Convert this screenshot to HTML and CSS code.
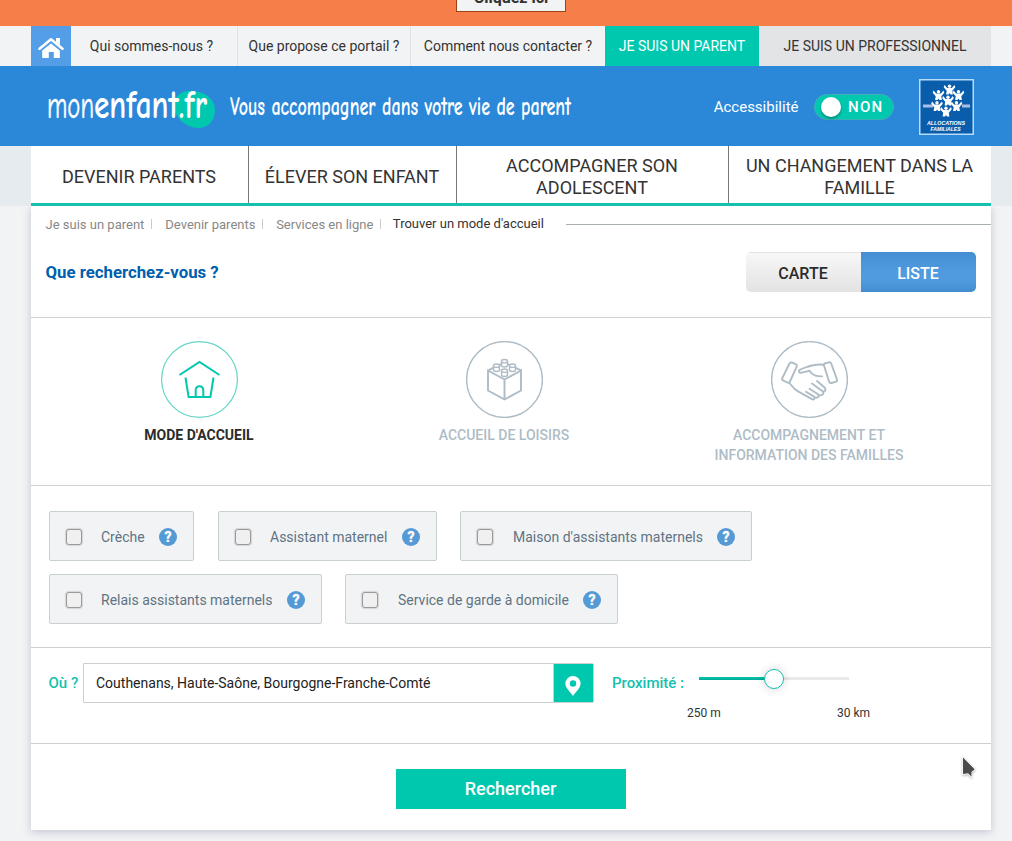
FILE: index.html
```html
<!DOCTYPE html>
<html lang="fr">
<head>
<meta charset="utf-8">
<title>monenfant.fr</title>
<link rel="stylesheet" href="styles.css">
</head>
<body>
<div class="notice"><a class="notice-btn">Cliquez ici</a></div>

<div class="topbar wrap">
  <a class="home"><svg width="26" height="22" viewBox="0 0 26 22"><path d="M1.5 11.8 13 2.3l11.500 9.500" fill="none" stroke="#fff" stroke-width="2.500" stroke-linecap="round" stroke-linejoin="round"/><path d="M18 1h4v7l-4-3.300zM4.200 13.600 13 6.400l8.800 7.200V21h-6v-6h-5v6h-6.600z" fill="#fff"/></svg></a>
  <a class="tl tl-a">Qui sommes-nous ?</a>
  <a class="tl tl-b">Que propose ce portail ?</a>
  <a class="tl tl-c">Comment nous contacter ?</a>
  <a class="tl tl-parent">JE SUIS UN PARENT</a>
  <a class="tl tl-pro">JE SUIS UN PROFESSIONNEL</a>
</div>

<header class="banner wrap">
  <svg class="brand" width="560" height="80" viewBox="0 0 560 80">
    <path d="M143 37c2-9 10-13 20-12 12 1 21 9 21 19 0 11-7 18-17 18-12 0-26-12-24-25z" fill="#00c8af"/>
    <text class="hand" x="16" y="52" font-size="39" textLength="47" lengthAdjust="spacingAndGlyphs">mon</text>
    <text class="hand hand-b" x="63" y="52" font-size="40" textLength="113" lengthAdjust="spacingAndGlyphs">enfant.fr</text>
    <text class="hand hand-b" x="199" y="49" font-size="26" textLength="341" lengthAdjust="spacingAndGlyphs">Vous accompagner dans votre vie de parent</text>
  </svg>
  <div class="access"><span>Accessibilité</span><span class="toggle"><i class="knob"></i>NON</span></div>
  <svg class="af" width="55" height="56" viewBox="0 0 55 56">
    <defs><g id="kid" fill="#fff"><circle cx="0" cy="-3.200" r="1.700"/><path d="M-4.900-4.600-2.400-1.400H2.400L4.900-4.600 5.800-2.200 2.800 1.200 3.400 5H1L0 3.600-1 5H-3.400l.6-3.800L-5.800-2.200z"/></g></defs>
    <rect x=".75" y=".75" width="53.500" height="54.500" fill="#0a5dab" stroke="#b5dcf8" stroke-width="1.500"/>
    <path d="M4 27h10M43 27h8" stroke="#a9bfe6" stroke-width="3"/>
    <use href="#kid" x="30.500" y="10.500"/><use href="#kid" x="19.500" y="16"/><use href="#kid" x="39.500" y="16"/><use href="#kid" x="29" y="21.500"/><use href="#kid" x="18" y="27"/><use href="#kid" x="37.500" y="27"/><use href="#kid" x="27" y="32.500"/>
    <text class="af-t" x="8" y="45.500" textLength="38" lengthAdjust="spacingAndGlyphs">ALLOCATIONS</text>
    <text class="af-t" x="11.500" y="51.500" textLength="30" lengthAdjust="spacingAndGlyphs">FAMILIALES</text>
  </svg>
</header>

<nav class="mainnav wrap">
  <div class="navrow">
    <a class="n1">DEVENIR PARENTS</a>
    <a class="n2">ÉLEVER SON ENFANT</a>
    <a class="n3">ACCOMPAGNER SON<br>ADOLESCENT</a>
    <a class="n4">UN CHANGEMENT DANS LA<br>FAMILLE</a>
  </div>
</nav>

<main class="card">
  <section class="intro">
    <div class="crumbs">
      <a class="c1">Je suis un parent</a><a class="c2">Devenir parents</a><a class="c3">Services en ligne</a><span class="here">Trouver un mode d'accueil</span><i class="rule"></i>
    </div>
    <div class="titlebar">
      <h1>Que recherchez-vous ?</h1>
      <div class="views"><button class="view">CARTE</button><button class="view view-on">LISTE</button></div>
    </div>
  </section>

  <section class="kinds">
    <div class="kind kind-on">
      <svg width="77" height="77" viewBox="0 0 77 77" fill="none"><circle cx="38.500" cy="38.500" r="37.900" stroke="#66d5c5" stroke-width="1.200"/><path d="M18.500 34 38.500 21 58.500 34M24.500 36.500l3.100 19.500h21.800l3.100-19.500M34.700 56v-7a3.800 3.800 0 0 1 7.600 0v7" stroke="#00c8af" stroke-width="2"/></svg>
      <span>MODE D'ACCUEIL</span>
    </div>
    <div class="kind">
      <svg width="77" height="77" viewBox="0 0 77 77" fill="none" stroke="#aebcc6"><circle cx="38.500" cy="38.500" r="37.900" stroke-width="1.400"/><path d="M22 29.500v20L38.500 58.500 55 49.500v-20L38.500 38.500zM38.500 38.500v20M22 29.500l5-2.700M33.500 24l2-1.200M55 29.500l-5-2.700M43.500 24l-2-1.200" stroke-width="1.900"/>
        <g fill="#fff" stroke-width="1.400"><path d="M35.500 20.200v4c0 2.400 6 2.400 6 0v-4"/><ellipse cx="38.500" cy="20.200" rx="3" ry="1.700"/><path d="M27.500 24.700v4c0 2.400 6 2.400 6 0v-4"/><ellipse cx="30.500" cy="24.700" rx="3" ry="1.700"/><path d="M43.500 24.700v4c0 2.400 6 2.400 6 0v-4"/><ellipse cx="46.500" cy="24.700" rx="3" ry="1.700"/><path d="M35.500 29.700v4c0 2.400 6 2.400 6 0v-4"/><ellipse cx="38.500" cy="29.700" rx="3" ry="1.700"/></g></svg>
      <span>ACCUEIL DE LOISIRS</span>
    </div>
    <div class="kind">
      <svg width="77" height="77" viewBox="0 0 77 77" fill="none" stroke="#aebcc6"><circle cx="38.500" cy="38.500" r="37.900" stroke-width="1.400"/>
        <g stroke-width="1.900" stroke-linecap="round" stroke-linejoin="round"><path d="M18.500 22.500q1-1.500 2.800-.8l3.300 1.500q1.800.8 1 2.600L19 40.500q-.8 1.700-2.500 1L12.300 39.600q-1.700-.8-1-2.500z"/><path d="M53 24.500q-.4-1.800 1.400-2.300l3.500-.8q1.800-.4 2.400 1.300L66 38.500q.5 1.800-1.300 2.300l-4.300 1.200q-1.800.4-2.300-1.400z"/><path d="M52.500 23.800c-6-1-8-.7-13.500 1.200-4 1.300-7.500 2-10.500 4-1.500 1.200-.3 3 1.700 2.700 4-.7 6-1.500 8.300-2 3 5 7 5.500 12.500 5.700M19 42.500c3 4 4 6 8.500 8.200L41 58.200c2 .9 3.300-.8 2.300-2.300L35 50.700M43.500 56.400c3 1.300 5.300-1 3.500-3.200l-8.500-5.500M47.500 54c3.500 1.200 6-1.200 4.300-3.600L41 42.500M52 50.500c3 0 3-2.500 1.500-4L46 40"/></g></svg>
      <span>ACCOMPAGNEMENT ET<br>INFORMATION DES FAMILLES</span>
    </div>
  </section>

  <section class="filters">
    <div class="frow">
      <label class="f f1"><i class="box"></i><span>Crèche</span><b class="help">?</b></label>
      <label class="f f2"><i class="box"></i><span>Assistant maternel</span><b class="help">?</b></label>
      <label class="f f3"><i class="box"></i><span>Maison d'assistants maternels</span><b class="help">?</b></label>
    </div>
    <div class="frow">
      <label class="f f4"><i class="box"></i><span>Relais assistants maternels</span><b class="help">?</b></label>
      <label class="f f4 f5"><i class="box"></i><span>Service de garde à domicile</span><b class="help">?</b></label>
    </div>
  </section>

  <section class="where">
    <span class="lab lab-ou">Où ?</span>
    <div class="field"><span class="val">Couthenans, Haute-Saône, Bourgogne-Franche-Comté</span><span class="pin"><svg width="16" height="20" viewBox="0 0 16 20"><path fill-rule="evenodd" fill="#fff" d="M8 0a7.600 7.600 0 0 0-7.600 7.600C.4 12 5 15.500 8 20c3-4.500 7.600-8 7.600-12.400A7.600 7.600 0 0 0 8 0zm0 4.300a3.200 3.200 0 1 1 0 6.400 3.200 3.200 0 0 1 0-6.400z"/></svg></span></div>
    <span class="lab lab-prox">Proximité :</span>
    <div class="range">
      <div class="track"><i class="fill"></i><i class="handle"></i></div>
      <div class="ends"><span>250 m</span><span>30 km</span></div>
    </div>
  </section>

  <section class="submit"><button class="go">Rechercher</button></section>
  <svg class="cursor" width="18" height="28" viewBox="0 0 18 28"><path d="M4 3.500v16.500l5-.8 3.500 3.300V18l3.200-2.700z" fill="#4a4a4a" stroke="#fff" stroke-width="1.500" paint-order="stroke"/></svg>
</main>
</body>
</html>
```
FILE: styles.css
```css
* { box-sizing: border-box; }
body { margin: 0; height: 841px; overflow: hidden; background: #f2f3f5; color: #333; font-family: Roboto, sans-serif; font-size: 14px; }
.wrap { padding: 0 21px 0 31px; }
button { font-family: inherit; border: 0; padding: 0; }

.notice { height: 26px; background: #f67e48; display: flex; align-items: flex-end; justify-content: center; padding: 0 0 14px 10px; overflow: hidden; }
.notice-btn { flex: none; width: 110px; height: 34px; border: 1px solid #a04018; background: #f2f3f5; text-align: center; font-weight: 700; font-size: 16px; line-height: 14px; padding-top: 12px; }

.topbar { display: flex; height: 40px; }
.home { width: 40px; background: #549ee7; display: flex; align-items: center; justify-content: center; padding-top: 3px; }
.tl { line-height: 40px; text-align: center; white-space: nowrap; }
.tl-a { width: 167px; border-right: 1px solid #dfe1e4; padding-right: 5px; }
.tl-b { width: 173px; border-right: 1px solid #dfe1e4; }
.tl-c { width: 194px; }
.tl-parent { width: 154px; background: #00c8af; color: #fff; }
.tl-pro { width: 232px; background: #e3e4e6; }

.banner { height: 80px; background: #2b88d9; display: flex; align-items: center; }
.brand { flex: none; }
.hand { font-family: "Comic Neue", Lato, sans-serif; fill: #fff; font-weight: 400; stroke: #fff; stroke-width: .5px; }
.hand-b { font-weight: 700; stroke: none; }
.access { margin-left: auto; margin-right: 25px; display: flex; align-items: center; gap: 15.500px; color: #fff; font-size: 15px; padding-top: 2px; }
.toggle { width: 80px; height: 26px; border: 1px solid #3eb0b5; border-radius: 13px; background: #00c8af; display: flex; align-items: center; padding-left: 6px; gap: 7px; font-weight: 500; letter-spacing: 1.3px; }
.knob { width: 20px; height: 20px; border-radius: 50%; background: #fff; box-shadow: 0 2px 3px rgba(0,0,0,.3); }
.af { flex: none; margin: 1px 17px 0 0; }
.af-t { font-family: "Liberation Sans", sans-serif; font-size: 5.500px; font-style: italic; font-weight: 700; fill: #fff; }

.mainnav { height: 60px; background: #e6ebef; }
.navrow { display: flex; height: 60px; background: #fff; border-bottom: 3px solid #14c1ae; font-size: 18px; line-height: 22px; text-align: center; }
.navrow a { display: flex; align-items: center; justify-content: center; border-right: 1px solid #777; padding: 4px 1px 0 0; }
.n1 { width: 218px; } .n2 { width: 208px; } .n3 { width: 272px; } .navrow .n4 { width: 262px; border: 0; }

.card { position: relative; margin: 0 21px 0 31px; height: 624px; background: #fff; box-shadow: 0 2px 8px rgba(70,80,110,.28); clip-path: inset(0 -12px -12px -12px); }
.card section { border-bottom: 1px solid #ced1d4; }
.intro { height: 112px; padding-left: 14.500px; }
.crumbs { display: flex; align-items: center; height: 36px; font-size: 13px; color: #888; white-space: nowrap; }
.crumbs a { position: relative; }
.crumbs a::after { content: ""; position: absolute; right: -8px; top: 2px; width: 1px; height: 10px; background: #ccc; }
.c1 { margin-right: 21px; } .c2 { margin-right: 20.700px; } .c3 { margin-right: 19.500px; }
.here { color: #333; padding-bottom: 2px; }
.rule { flex: 1; height: 1px; margin-left: 22px; background: #a8b0b2; }
.titlebar { display: flex; justify-content: space-between; padding: 10px 15px 0 0; }
h1 { margin: 0; font-size: 16.800px; line-height: 40px; color: #005fae; font-weight: 700; }
.views { display: flex; height: 40px; border-radius: 5px; overflow: hidden; }
.view { width: 115px; font-size: 16px; font-weight: 500; color: #2b2b2b; background: linear-gradient(#f7f7f7, #e3e3e3); border-top: 1px solid #e3e3e3; padding: 2px 1px 0 0; }
.view-on { color: #fff; border-top: 0; padding-top: 3px; background: linear-gradient(#448dd2, #509be0 50%, #509be0 70%, #438ccf); }

.kinds { height: 168px; display: flex; padding: 23px 29px 0 16px; }
.kind { width: 305px; text-align: center; color: #aebcc6; font-weight: 500; line-height: 20px; }
.kind svg { display: block; margin: 0 auto 7px; }
.kind span { display: block; margin-right: 1px; }
.kind-on { color: #2b2b2b; font-weight: 700; }

.filters { height: 162px; padding: 25px 0 0 18px; display: flex; flex-direction: column; gap: 13px; }
.frow { display: flex; gap: 23px; }
.f { height: 50px; padding: 2px 16px 0; border: 1px solid #c8d0d0; border-radius: 2px; background: #f2f3f5; display: flex; align-items: center; color: #5f7382; white-space: nowrap; }
.f1 { width: 145px; margin-right: 1px; } .f2 { width: 219px; } .f3 { width: 292px; } .f4 { width: 273px; }
.box { width: 16px; height: 16px; border: 1px solid #999; border-radius: 3px; background: #f0f0f1; margin: -1px 19px 0 0; box-shadow: 0 0 1px 1px rgba(0,0,0,.12); }
.f3 .box, .f5 .box { margin-right: 20px; }
.help { margin-left: auto; width: 18px; height: 18px; border-radius: 50%; background: #5599d5; color: #fff; font-size: 14px; line-height: 18px; text-align: center; -webkit-text-stroke: .4px #fff; }

.where { height: 96px; padding: 15px 0 0 17.500px; display: flex; }
.lab { color: #14c1ae; font-size: 15px; font-weight: 500; line-height: 40px; white-space: nowrap; }
.lab-ou { width: 34.500px; }
.field { width: 511px; height: 40px; border: 1px solid #ccd0d2; display: flex; color: #222; line-height: 38px; border-radius: 0 2px 2px 0; }
.val { flex: 1; padding-left: 12px; border-right: 1px solid #ccd0d2; }
.pin { width: 39px; background: #00c8af; display: flex; align-items: center; justify-content: center; padding: 5px 1px 0 0; }
.lab-prox { width: 87px; margin-left: 18px; }
.range { width: 150px; padding-top: 14px; }
.track { position: relative; height: 3px; background: #e9e9e9; }
.fill { display: block; width: 50%; height: 3px; background: linear-gradient(#00c8af, #00a994); }
.handle { position: absolute; left: 65px; top: -8px; width: 20px; height: 20px; border: 1px solid #14c1ae; border-radius: 50%; background: #fff; box-shadow: 0 0 10px rgba(0,0,0,.18); }
.ends { display: flex; justify-content: space-between; margin: 26px -21px 0 -12px; font-size: 12px; line-height: 14px; }

.card .submit { border: 0; padding: 25px 0 0 365px; }
.go { width: 230px; height: 40px; background: #00c8af; color: #fff; font-size: 18px; font-weight: 500; padding: 0 1px 2px 0; }
.cursor { position: absolute; left: 928px; top: 548px; filter: drop-shadow(0 1px 1px rgba(0,0,0,.3)); }
```
